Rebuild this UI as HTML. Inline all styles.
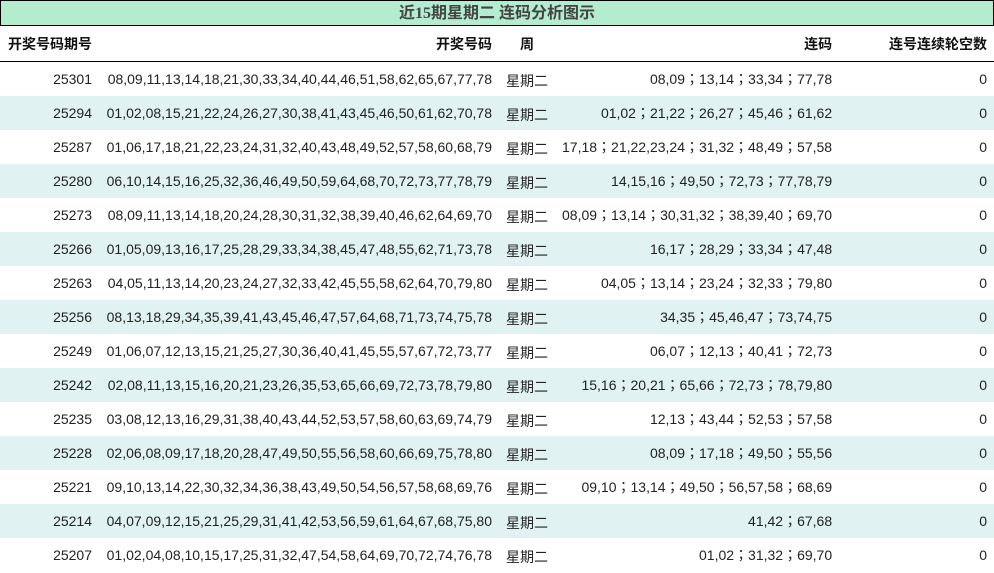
<!DOCTYPE html>
<html><head><meta charset="utf-8"><style>
body{margin:0;background:#fff;font-family:"Liberation Sans","Noto Sans CJK SC",sans-serif;}
.t{position:absolute;left:0;top:0;width:992px;height:24px;background:#b4ecd0;border:1px solid #000;text-align:center;font:bold 16px "Liberation Serif","Noto Sans CJK SC",serif;color:#444;line-height:26px;}
table{position:absolute;left:0;top:26px;width:994px;border-collapse:collapse;font-size:14px;color:#222;}
th{height:35px;font-weight:bold;border-bottom:1px solid #000;padding:0 7px;font-size:14px;color:#111}
td{height:34px;padding:0 7px;white-space:nowrap}
tr.a td{background:#e0f2f1}
.r{text-align:right}.c{text-align:center}
td.c{padding-top:3px;height:31px}
td.l{font-family:"Liberation Sans","Noto Sans CJK TC",sans-serif}
</style></head><body>
<div class="t">近15期星期二 连码分析图示</div>
<table>
<colgroup><col style="width:99px"><col style="width:400px"><col style="width:56px"><col style="width:283px"><col></colgroup>
<tr><th class="r" style="text-align:left;padding-left:8px">开奖号码期号</th><th class="r">开奖号码</th><th class="c">周</th><th class="r">连码</th><th class="r">连号连续轮空数</th></tr>
<tr><td class="r">25301</td><td class="r">08,09,11,13,14,18,21,30,33,34,40,44,46,51,58,62,65,67,77,78</td><td class="c">星期二</td><td class="r l">08,09；13,14；33,34；77,78</td><td class="r">0</td></tr>
<tr class="a"><td class="r">25294</td><td class="r">01,02,08,15,21,22,24,26,27,30,38,41,43,45,46,50,61,62,70,78</td><td class="c">星期二</td><td class="r l">01,02；21,22；26,27；45,46；61,62</td><td class="r">0</td></tr>
<tr><td class="r">25287</td><td class="r">01,06,17,18,21,22,23,24,31,32,40,43,48,49,52,57,58,60,68,79</td><td class="c">星期二</td><td class="r l">17,18；21,22,23,24；31,32；48,49；57,58</td><td class="r">0</td></tr>
<tr class="a"><td class="r">25280</td><td class="r">06,10,14,15,16,25,32,36,46,49,50,59,64,68,70,72,73,77,78,79</td><td class="c">星期二</td><td class="r l">14,15,16；49,50；72,73；77,78,79</td><td class="r">0</td></tr>
<tr><td class="r">25273</td><td class="r">08,09,11,13,14,18,20,24,28,30,31,32,38,39,40,46,62,64,69,70</td><td class="c">星期二</td><td class="r l">08,09；13,14；30,31,32；38,39,40；69,70</td><td class="r">0</td></tr>
<tr class="a"><td class="r">25266</td><td class="r">01,05,09,13,16,17,25,28,29,33,34,38,45,47,48,55,62,71,73,78</td><td class="c">星期二</td><td class="r l">16,17；28,29；33,34；47,48</td><td class="r">0</td></tr>
<tr><td class="r">25263</td><td class="r">04,05,11,13,14,20,23,24,27,32,33,42,45,55,58,62,64,70,79,80</td><td class="c">星期二</td><td class="r l">04,05；13,14；23,24；32,33；79,80</td><td class="r">0</td></tr>
<tr class="a"><td class="r">25256</td><td class="r">08,13,18,29,34,35,39,41,43,45,46,47,57,64,68,71,73,74,75,78</td><td class="c">星期二</td><td class="r l">34,35；45,46,47；73,74,75</td><td class="r">0</td></tr>
<tr><td class="r">25249</td><td class="r">01,06,07,12,13,15,21,25,27,30,36,40,41,45,55,57,67,72,73,77</td><td class="c">星期二</td><td class="r l">06,07；12,13；40,41；72,73</td><td class="r">0</td></tr>
<tr class="a"><td class="r">25242</td><td class="r">02,08,11,13,15,16,20,21,23,26,35,53,65,66,69,72,73,78,79,80</td><td class="c">星期二</td><td class="r l">15,16；20,21；65,66；72,73；78,79,80</td><td class="r">0</td></tr>
<tr><td class="r">25235</td><td class="r">03,08,12,13,16,29,31,38,40,43,44,52,53,57,58,60,63,69,74,79</td><td class="c">星期二</td><td class="r l">12,13；43,44；52,53；57,58</td><td class="r">0</td></tr>
<tr class="a"><td class="r">25228</td><td class="r">02,06,08,09,17,18,20,28,47,49,50,55,56,58,60,66,69,75,78,80</td><td class="c">星期二</td><td class="r l">08,09；17,18；49,50；55,56</td><td class="r">0</td></tr>
<tr><td class="r">25221</td><td class="r">09,10,13,14,22,30,32,34,36,38,43,49,50,54,56,57,58,68,69,76</td><td class="c">星期二</td><td class="r l">09,10；13,14；49,50；56,57,58；68,69</td><td class="r">0</td></tr>
<tr class="a"><td class="r">25214</td><td class="r">04,07,09,12,15,21,25,29,31,41,42,53,56,59,61,64,67,68,75,80</td><td class="c">星期二</td><td class="r l">41,42；67,68</td><td class="r">0</td></tr>
<tr><td class="r">25207</td><td class="r">01,02,04,08,10,15,17,25,31,32,47,54,58,64,69,70,72,74,76,78</td><td class="c">星期二</td><td class="r l">01,02；31,32；69,70</td><td class="r">0</td></tr>
</table>
</body></html>
